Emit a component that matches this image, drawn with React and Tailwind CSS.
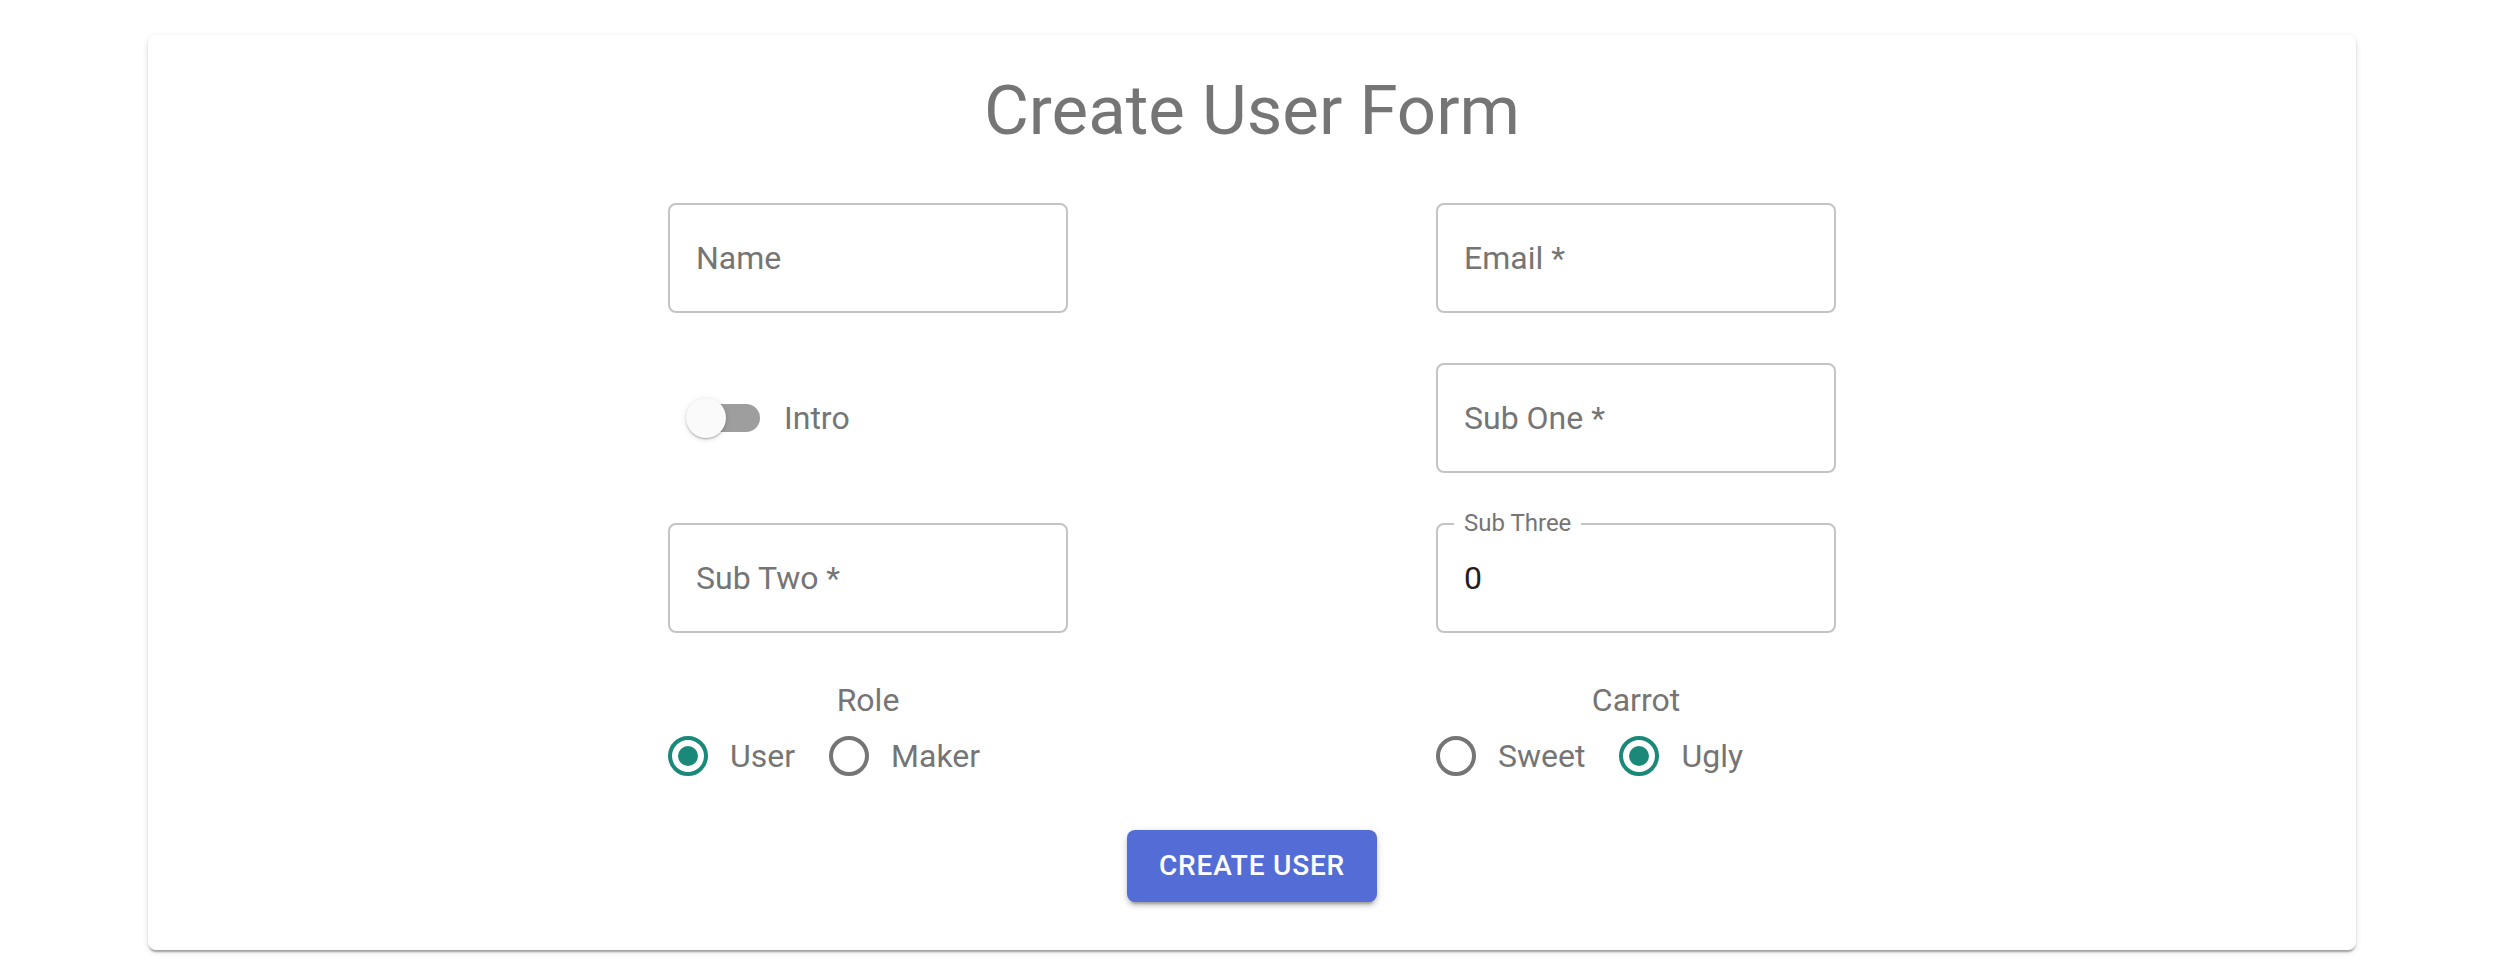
import React from 'react';

const TextBox = ({ label, value }) => (
  <div className="relative w-[400px] h-[110px] border-2 border-[#c4c4c4] rounded-[8px] flex items-center px-[26px]">
    {value !== undefined ? (
      <>
        <span className="absolute left-[16px] top-[-14px] bg-white px-[10px] text-[24px] leading-[24px] text-[#757575]">
          {label}
        </span>
        <span className="text-[32px] text-[#1f1f1f]">{value}</span>
      </>
    ) : (
      <span className="text-[32px] text-[#757575]">{label}</span>
    )}
  </div>
);

const Toggle = ({ label }) => (
  <div className="w-[400px] h-[110px] flex items-center">
    <div className="relative w-[116px] h-[76px]">
      <div className="absolute left-[24px] top-[24px] w-[68px] h-[28px] rounded-full bg-[#9e9e9e]" />
      <div className="absolute left-[18px] top-[18px] w-[40px] h-[40px] rounded-full bg-[#fafafa] shadow-[0_2px_2px_-1px_rgba(0,0,0,0.2),0_1px_2px_0_rgba(0,0,0,0.14),0_1px_6px_0_rgba(0,0,0,0.12)]" />
    </div>
    <span className="text-[32px] text-[#757575]">{label}</span>
  </div>
);

const Radio = ({ label, checked }) => (
  <div className="flex items-center gap-[22px]">
    <div
      className={`w-[40px] h-[40px] rounded-full border-[4px] flex items-center justify-center ${
        checked ? 'border-[#1b897a]' : 'border-[#757575]'
      }`}
    >
      {checked && <div className="w-[20px] h-[20px] rounded-full bg-[#1b897a]" />}
    </div>
    <span className="text-[32px] text-[#757575]">{label}</span>
  </div>
);

const RadioGroup = ({ title, options, selected }) => (
  <div className="w-[400px] flex flex-col">
    <div className="text-center text-[32px] leading-[46px] text-[#757575]">{title}</div>
    <div className="mt-[9px] h-[48px] flex items-center gap-[34px]">
      {options.map((opt) => (
        <Radio key={opt} label={opt} checked={opt === selected} />
      ))}
    </div>
  </div>
);

export default function App() {
  return (
    <div className="min-h-screen bg-white pt-[35px] pl-[148px] pr-[144px] pb-[24px] font-[Roboto,'Liberation_Sans',sans-serif]">
      <div className="bg-white rounded-[8px] pt-[33px] pb-[48px] shadow-[0_4px_2px_-2px_rgba(0,0,0,0.2),0_2px_2px_0_rgba(0,0,0,0.14),0_2px_6px_0_rgba(0,0,0,0.12)]">
        <h1 className="text-center text-[69px] leading-[85px] text-[#757575] font-normal">
          Create User Form
        </h1>

        <div className="mt-[50px] w-[1536px] mx-auto grid grid-cols-2 gap-y-[50px]">
          <div className="flex justify-center">
            <TextBox label="Name" />
          </div>
          <div className="flex justify-center">
            <TextBox label="Email *" />
          </div>
          <div className="flex justify-center">
            <Toggle label="Intro" />
          </div>
          <div className="flex justify-center">
            <TextBox label="Sub One *" />
          </div>
          <div className="flex justify-center">
            <TextBox label="Sub Two *" />
          </div>
          <div className="flex justify-center">
            <TextBox label="Sub Three" value="0" />
          </div>
        </div>

        <div className="mt-[44px] w-[1536px] mx-auto grid grid-cols-2">
          <div className="flex justify-center">
            <RadioGroup title="Role" options={['User', 'Maker']} selected="User" />
          </div>
          <div className="flex justify-center">
            <RadioGroup title="Carrot" options={['Sweet', 'Ugly']} selected="Ugly" />
          </div>
        </div>

        <div className="mt-[50px] flex justify-center">
          <button className="w-[250px] h-[72px] rounded-[8px] bg-[#546dd6] text-white text-[28px] font-medium tracking-[0.8px] uppercase shadow-[0_6px_2px_-4px_rgba(0,0,0,0.2),0_4px_4px_0_rgba(0,0,0,0.14),0_2px_10px_0_rgba(0,0,0,0.12)]">
            Create User
          </button>
        </div>
      </div>
    </div>
  );
}
